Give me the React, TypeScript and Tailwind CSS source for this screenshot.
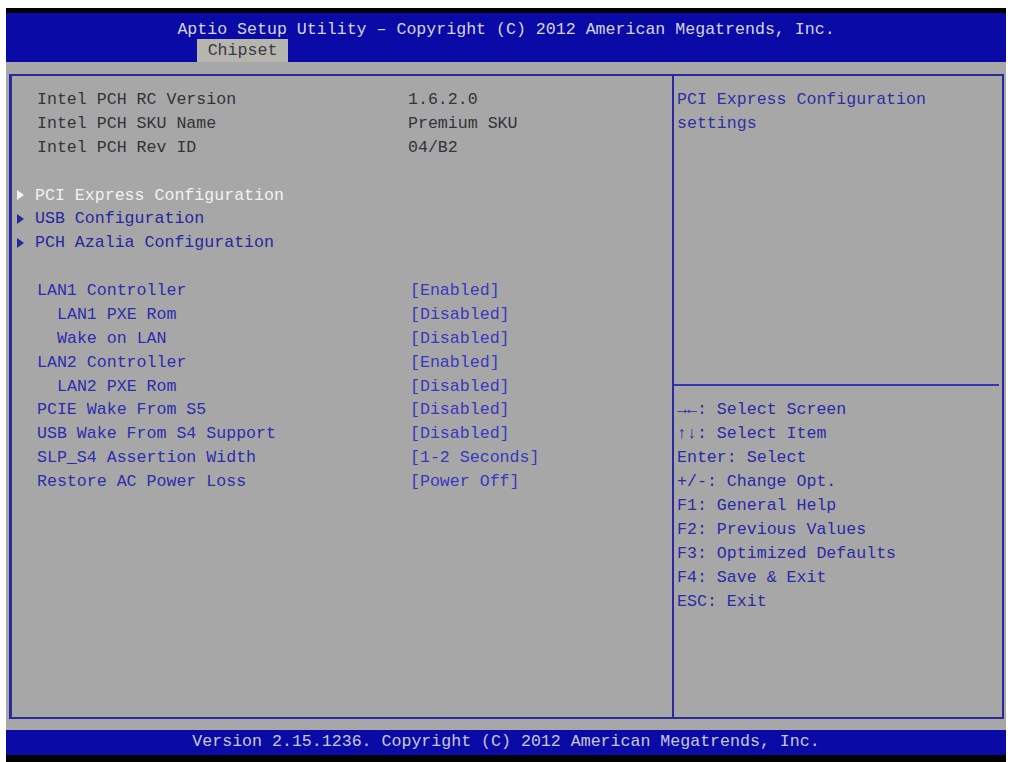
import React from "react";

const mono = { fontFamily: '"Liberation Mono", "DejaVu Sans Mono", monospace' };

type Row =
  | { kind: "info"; label: string; value: string }
  | { kind: "blank" }
  | { kind: "menu"; label: string; selected?: boolean }
  | { kind: "opt"; label: string; value: string; indent?: boolean };

const rows: Row[] = [
  { kind: "info", label: "Intel PCH RC Version", value: "1.6.2.0" },
  { kind: "info", label: "Intel PCH SKU Name", value: "Premium SKU" },
  { kind: "info", label: "Intel PCH Rev ID", value: "04/B2" },
  { kind: "blank" },
  { kind: "menu", label: "PCI Express Configuration", selected: true },
  { kind: "menu", label: "USB Configuration" },
  { kind: "menu", label: "PCH Azalia Configuration" },
  { kind: "blank" },
  { kind: "opt", label: "LAN1 Controller", value: "[Enabled]" },
  { kind: "opt", label: "LAN1 PXE Rom", value: "[Disabled]", indent: true },
  { kind: "opt", label: "Wake on LAN", value: "[Disabled]", indent: true },
  { kind: "opt", label: "LAN2 Controller", value: "[Enabled]" },
  { kind: "opt", label: "LAN2 PXE Rom", value: "[Disabled]", indent: true },
  { kind: "opt", label: "PCIE Wake From S5", value: "[Disabled]" },
  { kind: "opt", label: "USB Wake From S4 Support", value: "[Disabled]" },
  { kind: "opt", label: "SLP_S4 Assertion Width", value: "[1-2 Seconds]" },
  { kind: "opt", label: "Restore AC Power Loss", value: "[Power Off]" },
];

const help = [
  "\u2192\u2190: Select Screen",
  "\u2191\u2193: Select Item",
  "Enter: Select",
  "+/-: Change Opt.",
  "F1: General Help",
  "F2: Previous Values",
  "F3: Optimized Defaults",
  "F4: Save & Exit",
  "ESC: Exit",
];

function Arrow({ color }: { color: string }) {
  return (
    <svg width="7" height="10" viewBox="0 0 7 10" className="shrink-0">
      <polygon points="0,0 7,5 0,10" fill={color} />
    </svg>
  );
}

export default function App() {
  return (
    <div
      className="w-[1010px] h-[762px] bg-white pt-[8px] pl-[6px] pr-[4px] flex flex-col text-[16.6px]"
      style={mono}
    >
      {/* Header */}
      <div className="border-t-[5px] border-black bg-[#0a0aa6] h-[54px] flex flex-col items-center">
        <div className="h-[26px] pt-[4px] text-[#d4d4e4] leading-[26px] whitespace-pre">
          Aptio Setup Utility – Copyright (C) 2012 American Megatrends, Inc.
        </div>
        <div className="w-full flex pl-[191px] mt-auto">
          <div className="w-[91px] h-[23px] bg-[#b6b6ae] text-[#3a3a48] flex items-center justify-center leading-[23px]">
            Chipset
          </div>
        </div>
      </div>

      {/* Body */}
      <div className="flex-1 bg-[#a7a7a7] pt-[12px] pl-[3px] pr-[2px] pb-[11px] flex">
        <div className="flex-1 flex border-2 border-l-[3px] border-[#2a2a9e]">
          {/* Left column */}
          <div className="w-[662px] border-r-2 border-[#2a2a9e] pt-[12px] leading-[23.875px]">
            {rows.map((r, i) => {
              if (r.kind === "blank") return <div key={i} className="h-[23.875px]" />;
              if (r.kind === "info")
                return (
                  <div key={i} className="flex whitespace-pre text-[#333338]">
                    <div className="w-[396px] pl-[25px]">{r.label}</div>
                    <div>{r.value}</div>
                  </div>
                );
              if (r.kind === "menu")
                return (
                  <div
                    key={i}
                    className={`flex items-center whitespace-pre pl-[5px] ${
                      r.selected ? "text-[#f2f2f2]" : "text-[#2626a0]"
                    }`}
                  >
                    <Arrow color={r.selected ? "#f4f4f4" : "#2626a0"} />
                    <span className="pl-[11px]">{r.label}</span>
                  </div>
                );
              return (
                <div key={i} className="flex whitespace-pre">
                  <div
                    className={`w-[398px] text-[#2c2cb0] ${r.indent ? "pl-[45px]" : "pl-[25px]"}`}
                  >
                    {r.label}
                  </div>
                  <div className="text-[#3838c0]">{r.value}</div>
                </div>
              );
            })}
          </div>

          {/* Right column */}
          <div className="flex-1 flex flex-col">
            <div className="h-[308px] pt-[12px] pl-[3px] leading-[24px] text-[#2e2ea6]">
              <div className="whitespace-pre">PCI Express Configuration</div>
              <div>settings</div>
            </div>
            <div className="h-[2px] bg-[#3434b4] mr-[3px]" />
            <div className="pt-[12px] pl-[3px] leading-[24px] text-[#2a2aa8]">
              {help.map((h, i) => {
                const idx = h.indexOf(":");
                return (
                  <div key={i} className="whitespace-pre">
                    <span className={i < 2 ? "font-bold" : ""}>{h.slice(0, idx)}</span>
                    {h.slice(idx)}
                  </div>
                );
              })}
            </div>
          </div>
        </div>
      </div>

      {/* Footer */}
      <div className="bg-[#0a0aa6] h-[25px] flex items-center justify-center text-[#c8c8dc] whitespace-pre">
        Version 2.15.1236. Copyright (C) 2012 American Megatrends, Inc.
      </div>
      <div className="bg-black h-[7px]" />
    </div>
  );
}
